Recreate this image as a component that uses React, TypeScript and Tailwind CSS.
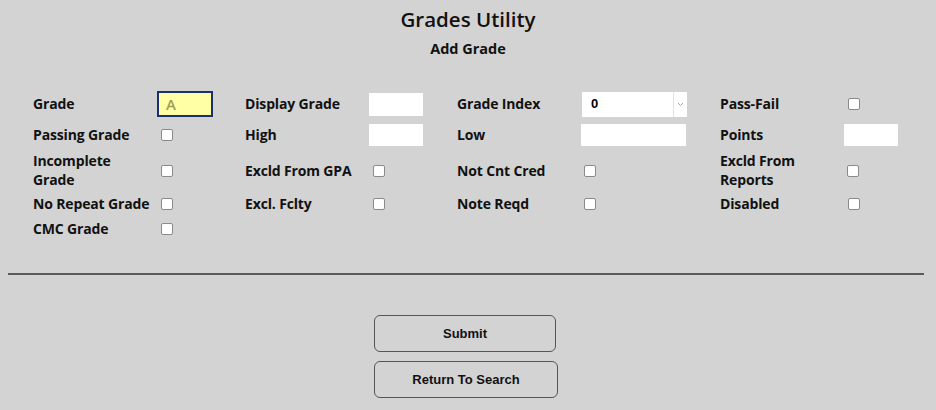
import React from "react"

const labelFont = { fontFamily: "'Open Sans', 'Noto Sans', sans-serif" }

function Label({ children }: { children: React.ReactNode }) {
  return (
    <div className="pb-[2px] text-[14px] leading-[19px] font-bold text-[#111] tracking-[-0.15px]">{children}</div>
  )
}

function Check({ offset = "ml-[4px]" }: { offset?: string }) {
  return (
    <div className="flex items-center">
      <span
        className={`block w-[12px] h-[12px] bg-white border border-[#8a8a8a] rounded-[2px] ${offset}`}
      />
    </div>
  )
}

function TextBox({ w, h }: { w: string; h: string }) {
  return <div className={`bg-white ${w} ${h}`} />
}

function GradeSelect() {
  return (
    <div className="flex h-[25px] w-[105px] bg-white items-stretch">
      <div className="flex-1 flex items-center pl-[9px] text-[13px] font-bold text-black" style={{ fontFamily: "'Liberation Sans', Arial, sans-serif" }}>
        0
      </div>
      <div className="w-[14px] border-l border-[#e2e2e2] flex items-center justify-center">
        <svg width="7" height="5" viewBox="0 0 7 5">
          <path d="M1 1 L3.5 3.5 L6 1" fill="none" stroke="#a8a8a8" strokeWidth="1" />
        </svg>
      </div>
    </div>
  )
}

export default function App() {
  return (
    <div className="w-[936px] h-[410px] bg-[#d3d3d3] overflow-hidden" style={labelFont}>
      <div className="pt-[5px] text-center text-[#111]">
        <h1 className="text-[20.5px] leading-[28px] font-semibold">Grades Utility</h1>
        <h2 className="mt-[6px] text-[14.5px] leading-[20px] font-bold">Add Grade</h2>
      </div>

      <div className="mt-[30px] pl-[33px] grid grid-cols-[124px_88px_124px_88px_124px_139px_124px_1fr] grid-rows-[30px_32px_40px_26px_24px] items-center">
        {/* row 1 */}
        <Label>Grade</Label>
        <div className="w-[56px] h-[26px] bg-[#ffffa6] border-2 border-[#1b2f6e] flex items-center pl-[7px] text-[15px] font-semibold text-[#a0a050]">
          A
        </div>
        <Label>Display Grade</Label>
        <TextBox w="w-[54px]" h="h-[23px]" />
        <Label>Grade Index</Label>
        <div className="ml-[1px]">
          <GradeSelect />
        </div>
        <Label>Pass-Fail</Label>
        <Check offset="ml-[4px]" />

        {/* row 2 */}
        <Label>Passing Grade</Label>
        <Check />
        <Label>High</Label>
        <TextBox w="w-[54px]" h="h-[22px]" />
        <Label>Low</Label>
        <TextBox w="w-[105px]" h="h-[22px]" />
        <Label>Points</Label>
        <TextBox w="w-[54px]" h="h-[22px]" />

        {/* row 3 */}
        <Label>
          Incomplete
          <br />
          Grade
        </Label>
        <Check />
        <Label>Excld From GPA</Label>
        <Check />
        <Label>Not Cnt Cred</Label>
        <Check offset="ml-[3px]" />
        <Label>
          Excld From
          <br />
          Reports
        </Label>
        <Check offset="ml-[3px]" />

        {/* row 4 */}
        <Label>No Repeat Grade</Label>
        <Check />
        <Label>Excl. Fclty</Label>
        <Check />
        <Label>Note Reqd</Label>
        <Check offset="ml-[3px]" />
        <Label>Disabled</Label>
        <Check offset="ml-[4px]" />

        {/* row 5 */}
        <Label>CMC Grade</Label>
        <Check />
      </div>

      <div className="mt-[32px] ml-[8px] mr-[12px] h-[2px] bg-[#5a5a5a]" />

      <div
        className="mt-[40px] ml-[374px] flex flex-col items-start gap-[9px] text-[13px] font-bold text-[#111]"
        style={{ fontFamily: "'Liberation Sans', Arial, sans-serif" }}
      >
        <button className="w-[182px] h-[37px] rounded-[6px] border border-[#555] bg-transparent">
          Submit
        </button>
        <button className="w-[184px] h-[37px] rounded-[6px] border border-[#555] bg-transparent">
          Return To Search
        </button>
      </div>
    </div>
  )
}
